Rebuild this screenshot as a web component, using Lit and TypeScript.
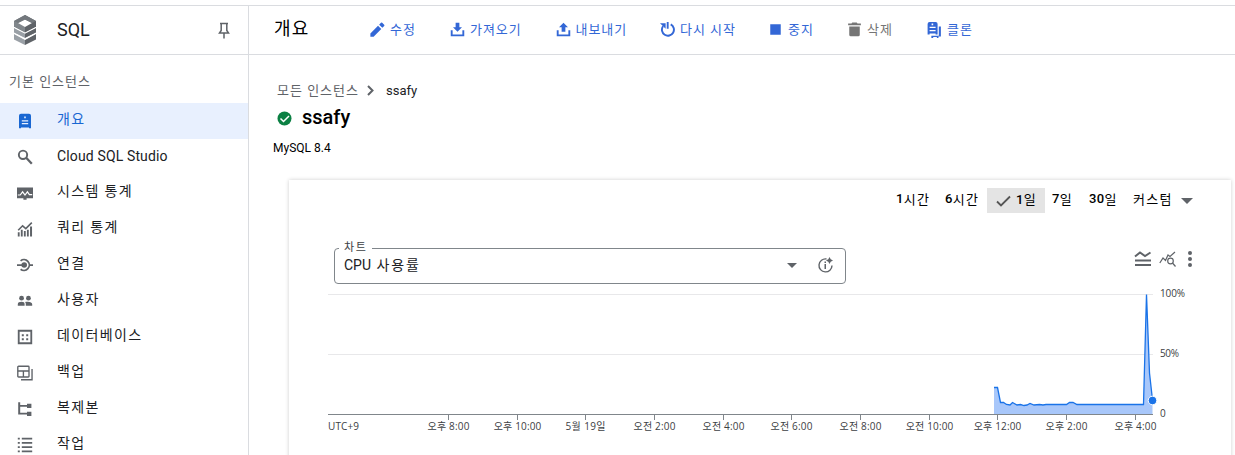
import { LitElement, html, css, svg } from "lit";
import { customElement, property } from "lit/decorators.js";

const icons: Record<string, any> = {
  overview: svg`<path fill-rule="evenodd" d="M5 1h10a2.500 2.500 0 0 1 2.500 2.500V19h-2.500v-1H5v1H2.500V3.500A2.500 2.500 0 0 1 5 1zm4 3.500v2h2v-2zM6 9v1.500h8V9zm0 3.500V14h8v-1.500z"/>`,
  search: svg`<circle cx="7.500" cy="7.200" r="5.200" fill="none" stroke="currentColor" stroke-width="2.400"/><path d="M11.500 11l7 7.500" stroke="currentColor" stroke-width="2.800"/>`,
  monitor: svg`<path d="M0 3h20v13.500h-8v2H8v-2H0z"/><path d="M1 12.500h3l3-4 3 4 3-4 2.500 3.500H19" fill="none" stroke="#fff" stroke-width="1.500"/>`,
  insights: svg`<path d="M1.500 11.500L7 6l4 3.500L18.500 2" fill="none" stroke="currentColor" stroke-width="2"/><path d="M1 14h2.300v5.500H1zM4.800 11h2.300v8.500H4.800zM8.600 12.500h2.300v7H8.600zM12.400 11h2.300v8.500h-2.300zM16.300 7h2.500v12.500h-2.500z"/>`,
  connect: svg`<circle cx="9" cy="10" r="3.500"/><path d="M0 9h7v2.200H0zM15 9h5v2.200h-5z"/><path d="M4.500 4.800A6.700 6.700 0 1 1 4.500 15.300" fill="none" stroke="currentColor" stroke-width="2.200"/>`,
  users: svg`<circle cx="5.700" cy="6.500" r="3"/><circle cx="14.300" cy="6.500" r="3"/><path d="M1 16v-2c0-2 2-3 4.700-3s3.800 1 3.800 3v2zM11 16v-2.500c0-1-.4-1.700-1-2.200 5-1 9 0 9 2.700v2z"/>`,
  database: svg`<path fill-rule="evenodd" d="M1 1h18v18H1zm2.300 2.300v13.400h13.400V3.300z"/><path d="M6 6.500h2.500V9H6zM11.500 6.500H14V9h-2.500zM6 11.500h2.500V14H6zM11.500 11.500H14V14h-2.500z"/>`,
  backup: svg`<g fill="none" stroke="currentColor" stroke-width="1.700"><rect x="1" y="1.500" width="14" height="13.500" rx="1"/><path d="M1 7.500h14M8 7.500V15M18.800 5v13.500H5"/></g>`,
  replica: svg`<path d="M1.500 1.500H4V5h8.500V3.500H18v5.300h-5.500V7.300H4v7.500h8.500v-1.500H18v5.300h-5.500V17h-11z"/>`,
  jobs: svg`<path d="M1 1h2.500v2.200H1zM6 1h13v2.200H6zM1 6.200h2.500v2.200H1zM6 6.200h13v2.200H6zM1 11.500h2.500v2.200H1zM6 11.500h13v2.200H6zM1 16.800h2.500V19H1zM6 16.800h13V19H6z"/>`,
  edit: svg`<path d="M.5 15.200V19.500h4.300L15 9.300 10.700 5zM18.900 5.400a1.200 1.200 0 0 0 0-1.700l-2.600-2.600a1.200 1.200 0 0 0-1.700 0L12.200 3.500l4.300 4.300z"/>`,
  import: svg`<path d="M7.500 1h5v6H16l-6 6-6-6h3.500zM1 11h2.500v5.500h13V11H19v8H1z"/>`,
  export: svg`<path d="M7.500 13h5V7H16l-6-6-6 6h3.500zM1 11h2.500v5.500h13V11H19v8H1z"/>`,
  restart: svg`<path d="M9 0h2.500v9H9z"/><path d="M14.300 3.200A8 8 0 1 1 4 5.700" fill="none" stroke="currentColor" stroke-width="2.600"/><path d="M0 1.800h7.500v7.200z"/>`,
  stop: svg`<path d="M3 3h14v14H3z"/>`,
  trash: svg`<path d="M3 6h14v11a2 2 0 0 1-2 2H5a2 2 0 0 1-2-2zM1.500 2H6l1-1.500h6L14 2h4.500v2.300h-17z"/>`,
  clone: svg`<path fill-rule="evenodd" d="M4.500 0h7.500a2.500 2.500 0 0 1 2.500 2.500V15.500h-2.500v-1h-7.500v1H2V2.500A2.500 2.500 0 0 1 4.500 0zM7 2v2h2V2zM4.500 6v1.600h7.500V6zm0 4v1.600h7.500V10z"/><path d="M16 5.500h2.600V18h-3v2h-2v-1.300H9V20H6.700v-2.800H16z"/>`,
};

@customElement("ui-icon")
export class UiIcon extends LitElement {
  @property() name = "";
  @property({ type: Number }) size = 16;
  static styles = css`:host{display:flex;flex:none}svg{display:block;fill:currentColor}`;
  render() {
    return html`<svg width=${this.size} height=${this.size} viewBox="0 0 20 20">${icons[this.name]}</svg>`;
  }
}

const nav = [
  ["overview", "개요"], ["search", "Cloud SQL Studio"], ["monitor", "시스템 통계"], ["insights", "쿼리 통계"],
  ["connect", "연결"], ["users", "사용자"], ["database", "데이터베이스"], ["backup", "백업"],
  ["replica", "복제본"], ["jobs", "작업"],
];
const tools: [string, string, number, number][] = [
  ["edit", "수정", 80, 15], ["import", "가져오기", 105.500, 15], ["export", "내보내기", 104.500, 15], ["restart", "다시 시작", 108, 15],
  ["stop", "중지", 79, 15], ["trash", "삭제", 79, 15], ["clone", "클론", 60, 16],
];
const ticks: [number, string, number][] = [
  [448.500, "오후 8:00", 42], [517.500, "오후 10:00", 47.500], [585.500, "5월 19일", 40], [654.500, "오전 2:00", 42],
  [723.500, "오전 4:00", 42], [791.500, "오전 6:00", 42], [860.500, "오전 8:00", 42], [929.500, "오전 10:00", 47.500],
  [997.500, "오후 12:00", 47.500], [1066.500, "오후 2:00", 42], [1135.500, "오후 4:00", 42],
];
const usage = "994,387.500 997.500,387.500 1000.500,402.500 1003.500,402.500 1006.500,404.500 1010,405 1012.500,402.500 1017,405 1020.500,404.500 1024,405.500 1027,405 1030,403.500 1034,405 1039.500,404.500 1043,405 1046,404.500 1066.500,404.500 1069.500,402.500 1073,402.500 1077,404.500 1143.500,404.500 1146.500,294.500 1149.500,373 1152.500,400";

@customElement("app-root")
export class AppRoot extends LitElement {
  static styles = css`
    :host{display:block;height:455px;overflow:hidden;background:#fff;color:#202124;font-family:Roboto,"Noto Sans CJK KR",sans-serif;font-size:14px;box-sizing:border-box;padding-top:5px}
    *{box-sizing:border-box}
    svg{display:block}
    .shell{display:grid;grid-template-columns:249px 1fr;height:450px;border-top:1px solid #dadce0}
    aside{border-right:1px solid #dadce0}
    .product{height:49px;border-bottom:1px solid #dadce0;display:flex;align-items:center;padding:0 17px 1px 13px}
    .product h1{font-size:18px;font-weight:400;margin:0 0 0 20px;flex:1;letter-spacing:0}
    .section{height:48px;padding:16px 0 0 9px;font-size:13px;line-height:22px;color:#5f6368;letter-spacing:1px}
    .item{height:36px;display:flex;align-items:center;padding-left:17px;color:#5f6368}
    .item span{margin-left:24px;color:#202124;letter-spacing:1.350px;padding-bottom:4px;line-height:20px}
    .item .latin{letter-spacing:.14px;padding-bottom:2px}
    .item.on{background:#e8f0fe;color:#1967d2}
    .item.on span{color:#1967d2}
    .bar{height:49px;border-bottom:1px solid #dadce0;display:flex;align-items:center;padding:0 0 2px 25px}
    .bar h2{font-size:18px;font-weight:400;color:#000;margin:0;width:96px;line-height:24px;letter-spacing:1.200px}
    .tool{display:flex;align-items:center;gap:5px;font-size:13px;color:#3367d6;white-space:nowrap;flex:none;letter-spacing:.95px}
    .tool span{padding-bottom:2px}
    .tool ui-icon{margin-top:1px}
    .tool.off{color:#757575}
    .crumbs{display:flex;align-items:center;margin:25px 0 0 28px;height:20px;font-size:13px;color:#5f6368}
    .crumbs span{letter-spacing:1px;width:90px;padding-bottom:2px}
    .crumbs b{font-weight:400;color:#202124;margin-left:12px}
    .name{display:flex;align-items:center;height:30px;margin:2px 0 0 28px;gap:10px;font-size:20px;font-weight:500;color:#000}
    .name svg{margin-top:3px}
    .name span{line-height:24px;padding-bottom:1px}
    .version{margin:8px 0 0 24px;font-size:12px;line-height:16px;height:16px;color:#000}
    .card{margin:24px 4px 0 40px;height:300px;background:#fff;box-shadow:0 0 4px rgba(0,0,0,.2)}
    .ranges{display:flex;justify-content:flex-end;align-items:center;padding:8px 38px 0 0;height:33px;color:#000;font-size:13px;font-weight:500}
    .ranges span{display:flex;align-items:center;justify-content:flex-start;height:25px;padding-bottom:4px;white-space:nowrap;letter-spacing:.3px}
    .ranges i{font-style:normal;font-weight:400;letter-spacing:1.300px}
    .ranges .on{background:#e4e4e4;width:58px;padding-left:9px;gap:5px;margin-right:7px}
    .ranges .on svg{margin-top:5px}
    .controls{display:flex;margin:34px 33px 0 45px;height:37px}
    fieldset{width:512px;height:37px;margin:0;padding:0 12px 0 10px;border:0;display:flex;align-items:center;position:relative;font-size:14px;color:#202124}
    .outline{position:absolute;inset:1px 0 0;border:1px solid #80868b;border-radius:4px}
    .label{position:absolute;left:5px;top:-8px;background:#fff;padding:0 0 0 5px;font-size:11px;line-height:17px;height:17px;white-space:nowrap;color:#3c4043;letter-spacing:1.600px;width:33px}
    .value{flex:1;letter-spacing:1.900px;line-height:20px;padding-bottom:1px}
    .value b{font-weight:400;letter-spacing:0}
    .chart-tools{margin-left:auto;display:flex;gap:6.500px;color:#5f6368;height:24px}
    .chart{margin-left:39px}
    .axis{font-family:"Open Sans","Noto Sans CJK KR",sans-serif;font-size:10px;fill:#3c4043}
  `;

  render() {
    return html`<div class="shell">
      <aside>
        <div class="product">
          <svg width="24" height="32" viewBox="0 0 24 32">
            <path d="M12 1L1 7v6l11 6V13L5 9l7-3.500z" fill="#80868b"/><path d="M12 1l11 6v6l-11 6v-6l7-4-7-3.500z" fill="#5f6368"/>
            <path d="M12 1L1 7l4 2 7-3.500L19 9l4-2z" fill="#73787d"/>
            <path d="M1 14l11 5.500V24L1 18.500zM1 20l11 6v5L1 25.500z" fill="#9aa0a6"/><path d="M23 14l-11 5.500V24l11-5.500zM23 20l-11 6v5l11-5.500z" fill="#5f6368"/>
            <path d="M1 13.300l11 5.700 11-5.700M1 19.300L12 25l11-5.700" fill="none" stroke="#fff" stroke-width="1"/>
          </svg>
          <h1>SQL</h1>
          <svg width="14" height="18" viewBox="0 0 14 18" fill="none" stroke="#5f6368" stroke-width="1.500"><path d="M3 2.500h8M4.200 2.500V9.500L2.500 12h9L9.800 9.500V2.500M7 12v5.500"/></svg>
        </div>
        <div class="section">기본 인스턴스</div>
        ${nav.map(([icon, label], i) => html`<div class="item ${i === 0 ? "on" : ""}"><ui-icon name=${icon}></ui-icon><span class=${i === 1 ? "latin" : ""}>${label}</span></div>`)}
      </aside>
      <main>
        <div class="bar"><h2>개요</h2>
          ${tools.map(([icon, label, width, size]) => html`<div class="tool ${icon === "trash" ? "off" : ""}" style="width:${width}px"><ui-icon name=${icon} size=${size}></ui-icon><span>${label}</span></div>`)}
        </div>
        <div class="crumbs"><span>모든 인스턴스</span><svg width="7" height="11" viewBox="0 0 7 11" fill="none" stroke="#5f6368" stroke-width="2"><path d="M1 1l4.500 4.500L1 10"/></svg><b>ssafy</b></div>
        <div class="name"><svg width="15" height="15" viewBox="0 0 15 15"><circle cx="7.500" cy="7.500" r="7" fill="#0b8043"/><path d="M3.500 7.500l3 3 5.500-5.500" fill="none" stroke="#fff" stroke-width="1.500"/></svg><span>ssafy</span></div>
        <div class="version">MySQL 8.4</div>
        <section class="card">
          <div class="ranges">
            <span style="width:49px">1<i>시간</i></span><span style="width:42px">6<i>시간</i></span>
            <span class="on"><svg width="15" height="12" viewBox="0 0 15 12" fill="none" stroke="#555" stroke-width="1.800"><path d="M1 6.500l4 4L14 1.500"/></svg><b style="font-weight:500">1<i>일</i></b></span>
            <span style="width:37px">7<i>일</i></span><span style="width:44px">30<i>일</i></span><span style="width:48px"><i>커스텀</i></span>
            <svg width="12" height="6" viewBox="0 0 12 6"><path d="M0 0h12L6 6z" fill="#5f6368"/></svg>
          </div>
          <div class="controls">
            <fieldset><div class="outline"></div><div class="label">차트</div>
              <div class="value"><b>CPU</b> 사용률</div>
              <svg width="10" height="5" viewBox="0 0 10 5"><path d="M0 0h10L5 5z" fill="#5f6368"/></svg>
              <svg style="margin-left:20px" width="17" height="17" viewBox="0 0 17 17"><path d="M9.500 2A6.500 6.500 0 1 0 15 8.500" fill="none" stroke="#5f6368" stroke-width="1.400"/><path d="M12.500 0l1.200 2.300L16 3.500l-2.300 1.200L12.500 7l-1.200-2.300L9 3.500l2.300-1.200zM7.500 7h1.500v5H7.500zM7.500 4.500h1.500V6H7.500z" fill="#5f6368"/></svg>
            </fieldset>
            <div class="chart-tools">
              <svg width="18" height="24" viewBox="0 0 18 24" fill="none" stroke="#5f6368"><path d="M1 9.500l5-4 5 3.500 5.500-3.500" stroke-width="2"/><path d="M1 13.500h16M1 18h16" stroke-width="2"/></svg>
              <svg width="17" height="24" viewBox="0 0 17 24" fill="none" stroke="#5f6368" stroke-width="1.200"><path d="M.8 16l3.200-5 2.500 2.500L9 8l2 1.500 5-4.500"/><circle cx="11.500" cy="14" r="2.800"/><path d="M13.500 16l3 3.500"/></svg>
              <svg width="16" height="24" viewBox="0 0 16 24" fill="#5f6368"><circle cx="8" cy="6" r="2"/><circle cx="8" cy="12" r="2"/><circle cx="8" cy="18" r="2"/></svg>
            </div>
          </div>
          <svg class="chart" width="880" height="171" viewBox="328 284 880 171">
            <path d="M328 294.500h825M328 354.500h825" stroke="#e8e8ea"/>
            <polygon points="994,414 ${usage} 1152.500,414" fill="#a8c7fa"/>
            <path d="M328 414.500h825" stroke="#80868b"/>
            <polyline points=${usage} fill="none" stroke="#1a73e8" stroke-width="1.300"/>
            <circle cx="1152.500" cy="400.500" r="4.300" fill="#1a73e8" stroke="#fff"/>
            <g class="axis">
              <text x="328" y="430" textLength="31">UTC+9</text>
              ${ticks.map(([x, label, w]) => svg`<path d="M${x} 415v5" stroke="#80868b"/><text x=${x - w / 2} y="430" textLength=${w}>${label}</text>`)}
              <text x="1160" y="297" textLength="25">100%</text><text x="1160" y="357" textLength="19">50%</text><text x="1160" y="417">0</text>
            </g>
          </svg>
        </section>
      </main>
    </div>`;
  }
}
